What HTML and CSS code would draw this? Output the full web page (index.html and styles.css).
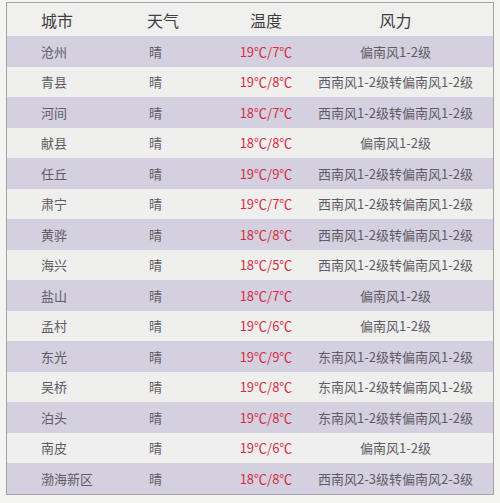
FILE: index.html
```html
<!DOCTYPE html>
<html lang="zh">
<head>
<meta charset="utf-8">
<link rel="stylesheet" href="styles.css">
</head>
<body>
<div class="table">
  <div class="row head">
    <div class="c city">城市</div>
    <div class="c wx">天气</div>
    <div class="c temp">温度</div>
    <div class="c wind">风力</div>
  </div>
  <div class="row odd"><div class="c city">沧州</div><div class="c wx">晴</div><div class="c temp red">19℃/7℃</div><div class="c wind">偏南风1-2级</div></div>
  <div class="row even"><div class="c city">青县</div><div class="c wx">晴</div><div class="c temp red">19℃/8℃</div><div class="c wind">西南风1-2级转偏南风1-2级</div></div>
  <div class="row odd"><div class="c city">河间</div><div class="c wx">晴</div><div class="c temp red">18℃/7℃</div><div class="c wind">西南风1-2级转偏南风1-2级</div></div>
  <div class="row even"><div class="c city">献县</div><div class="c wx">晴</div><div class="c temp red">18℃/8℃</div><div class="c wind">偏南风1-2级</div></div>
  <div class="row odd"><div class="c city">任丘</div><div class="c wx">晴</div><div class="c temp red">19℃/9℃</div><div class="c wind">西南风1-2级转偏南风1-2级</div></div>
  <div class="row even"><div class="c city">肃宁</div><div class="c wx">晴</div><div class="c temp red">19℃/7℃</div><div class="c wind">西南风1-2级转偏南风1-2级</div></div>
  <div class="row odd"><div class="c city">黄骅</div><div class="c wx">晴</div><div class="c temp red">18℃/8℃</div><div class="c wind">西南风1-2级转偏南风1-2级</div></div>
  <div class="row even"><div class="c city">海兴</div><div class="c wx">晴</div><div class="c temp red">18℃/5℃</div><div class="c wind">西南风1-2级转偏南风1-2级</div></div>
  <div class="row odd"><div class="c city">盐山</div><div class="c wx">晴</div><div class="c temp red">18℃/7℃</div><div class="c wind">偏南风1-2级</div></div>
  <div class="row even"><div class="c city">孟村</div><div class="c wx">晴</div><div class="c temp red">19℃/6℃</div><div class="c wind">偏南风1-2级</div></div>
  <div class="row odd"><div class="c city">东光</div><div class="c wx">晴</div><div class="c temp red">19℃/9℃</div><div class="c wind">东南风1-2级转偏南风1-2级</div></div>
  <div class="row even"><div class="c city">吴桥</div><div class="c wx">晴</div><div class="c temp red">19℃/8℃</div><div class="c wind">东南风1-2级转偏南风1-2级</div></div>
  <div class="row odd"><div class="c city">泊头</div><div class="c wx">晴</div><div class="c temp red">19℃/8℃</div><div class="c wind">东南风1-2级转偏南风1-2级</div></div>
  <div class="row even"><div class="c city">南皮</div><div class="c wx">晴</div><div class="c temp red">19℃/6℃</div><div class="c wind">偏南风1-2级</div></div>
  <div class="row odd"><div class="c city">渤海新区</div><div class="c wx">晴</div><div class="c temp red">18℃/8℃</div><div class="c wind">西南风2-3级转偏南风2-3级</div></div>
</div>
</body>
</html>
```

FILE: styles.css
```css
html, body {
  margin: 0;
  padding: 0;
  background: #f4f4f3;
}
body {
  padding: 2px 6px 0 6px;
  font-family: "Noto Sans CJK SC", "Noto Sans", sans-serif;
}
.table {
  width: 486px;
  border: 1px solid #a3a3a6;
  background: #f0f0ef;
}
.row {
  display: grid;
  grid-template-columns: 128px 95px 72px 1fr;
  align-items: center;
  height: 30.5px;
  font-size: 13px;
  color: #5f5c66;
}
.row.head {
  height: 33px;
  font-size: 16px;
  color: #3f3d44;
  background: #f0f0ef;
}
.row.odd {
  background: #d4d0df;
}
.row.even {
  background: #efefee;
}
.c {
  white-space: nowrap;
  line-height: 1;
}
.city {
  padding-left: 34px;
}
.wx {
  padding-left: 14px;
}
.row.head .wx {
  padding-left: 12px;
}
.temp {
  text-align: center;
}
.wind {
  text-align: center;
  padding-right: 4px;
}
.red {
  color: #d62c42;
}
```
